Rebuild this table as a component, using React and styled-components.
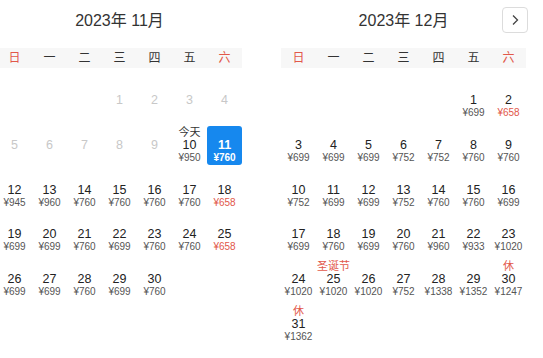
import React from 'react';
import styled, { createGlobalStyle } from 'styled-components';

const GlobalStyle = createGlobalStyle`
	html, body {
		margin: 0;
		padding: 0;
		background: #fff;
		overflow: hidden;
	}
	body {
		font-family: "Liberation Sans", "Noto Sans CJK SC", sans-serif;
		color: #333;
	}
`;

const Wrapper = styled.div`
	display: flex;
	gap: 39px;
	margin-left: -3px;
	width: 560px;
`;

const Panel = styled.div`
	width: 245px;
	flex: none;
`;

const Header = styled.div`
	position: relative;
	height: 48px;
	box-sizing: border-box;
	padding-top: 10px;
	text-align: center;
`;

const Title = styled.div`
	font-size: 16px;
	line-height: 21px;
	color: #333;
`;

const NextButton = styled.button`
	position: absolute;
	top: 7px;
	right: -2px;
	width: 26px;
	height: 26px;
	padding: 0;
	display: flex;
	align-items: center;
	justify-content: center;
	background: #fff;
	border: 1px solid #dcdcdc;
	border-radius: 4px;
	cursor: pointer;
`;

const Weekdays = styled.div`
	display: grid;
	grid-template-columns: repeat(7, 35px);
	height: 20px;
	background: #f7f7f7;
	font-size: 12px;
	line-height: 20px;
	text-align: center;
`;

const Weekday = styled.span`
	color: ${({ $weekend }) => ($weekend ? '#e2584a' : '#333')};
`;

const Days = styled.div`
	display: grid;
	grid-template-columns: repeat(7, 35px);
	grid-auto-rows: 39px;
	row-gap: 5.8px;
	margin-top: 13px;
`;

const Cell = styled.div`
	display: flex;
	flex-direction: column;
	align-items: center;
	border-radius: 3px;
	background: ${({ $selected }) => ($selected ? '#1688ee' : 'transparent')};
`;

const Label = styled.span`
	height: 13px;
	font-size: 11px;
	line-height: 13px;
	white-space: nowrap;
	color: ${({ $red }) => ($red ? '#e2584a' : '#333')};
`;

const Day = styled.span`
	height: 13px;
	font-size: 12.5px;
	line-height: 13px;
	color: ${({ $disabled, $selected }) => ($disabled ? '#c8c8c8' : $selected ? '#fff' : '#222')};
	font-weight: ${({ $selected }) => ($selected ? 600 : 400)};
`;

const Price = styled.span`
	height: 11px;
	font-size: 10px;
	line-height: 11px;
	white-space: nowrap;
	color: ${({ $low, $selected }) => ($selected ? '#fff' : $low ? '#e2584a' : '#555')};
	font-weight: ${({ $selected }) => ($selected ? 600 : 400)};
`;

const WEEK = ['日', '一', '二', '三', '四', '五', '六'];

const months = [
	{
		title: '2023年 11月',
		offset: 3,
		length: 30,
		disabledUntil: 9,
		today: 10,
		selected: 11,
		prices: {
			10: 950, 11: 760, 12: 945, 13: 960, 14: 760, 15: 760, 16: 760, 17: 760, 18: 658,
			19: 699, 20: 699, 21: 760, 22: 699, 23: 760, 24: 760, 25: 658,
			26: 699, 27: 699, 28: 760, 29: 699, 30: 760,
		},
		labels: {},
	},
	{
		title: '2023年 12月',
		offset: 5,
		length: 31,
		disabledUntil: 0,
		prices: {
			1: 699, 2: 658,
			3: 699, 4: 699, 5: 699, 6: 752, 7: 752, 8: 760, 9: 760,
			10: 752, 11: 699, 12: 699, 13: 752, 14: 760, 15: 760, 16: 699,
			17: 699, 18: 760, 19: 699, 20: 760, 21: 960, 22: 933, 23: 1020,
			24: 1020, 25: 1020, 26: 1020, 27: 752, 28: 1338, 29: 1352, 30: 1247,
			31: 1362,
		},
		labels: { 25: '圣诞节', 30: '休', 31: '休' },
		hasNext: true,
	},
];

function Month({ month }) {
	const blanks = Array.from({ length: month.offset });
	const days = Array.from({ length: month.length }, (_, i) => i + 1);

	return (
		<Panel>
			<Header>
				<Title>{month.title}</Title>
				{month.hasNext && (
					<NextButton aria-label="下个月">
						<svg width="12" height="12" viewBox="0 0 12 12">
							<path d="M4 1.5 L8.5 6 L4 10.5" fill="none" stroke="#444" strokeWidth="1.3" />
						</svg>
					</NextButton>
				)}
			</Header>
			<Weekdays>
				{WEEK.map((w, i) => (
					<Weekday key={w} $weekend={i === 0 || i === 6}>
						{w}
					</Weekday>
				))}
			</Weekdays>
			<Days>
				{blanks.map((_, i) => (
					<Cell key={`b${i}`} />
				))}
				{days.map(d => {
					const disabled = d <= month.disabledUntil;
					const selected = d === month.selected;
					const price = month.prices[d];
					const label = d === month.today ? '今天' : month.labels[d];
					return (
						<Cell key={d} $selected={selected}>
							<Label $red={d !== month.today}>{label}</Label>
							<Day $disabled={disabled} $selected={selected}>
								{d}
							</Day>
							{price && (
								<Price $low={price === 658} $selected={selected}>
									¥{price}
								</Price>
							)}
						</Cell>
					);
				})}
			</Days>
		</Panel>
	);
}

export default function App() {
	return (
		<>
			<GlobalStyle />
			<Wrapper>
				{months.map(m => (
					<Month key={m.title} month={m} />
				))}
			</Wrapper>
		</>
	);
}
